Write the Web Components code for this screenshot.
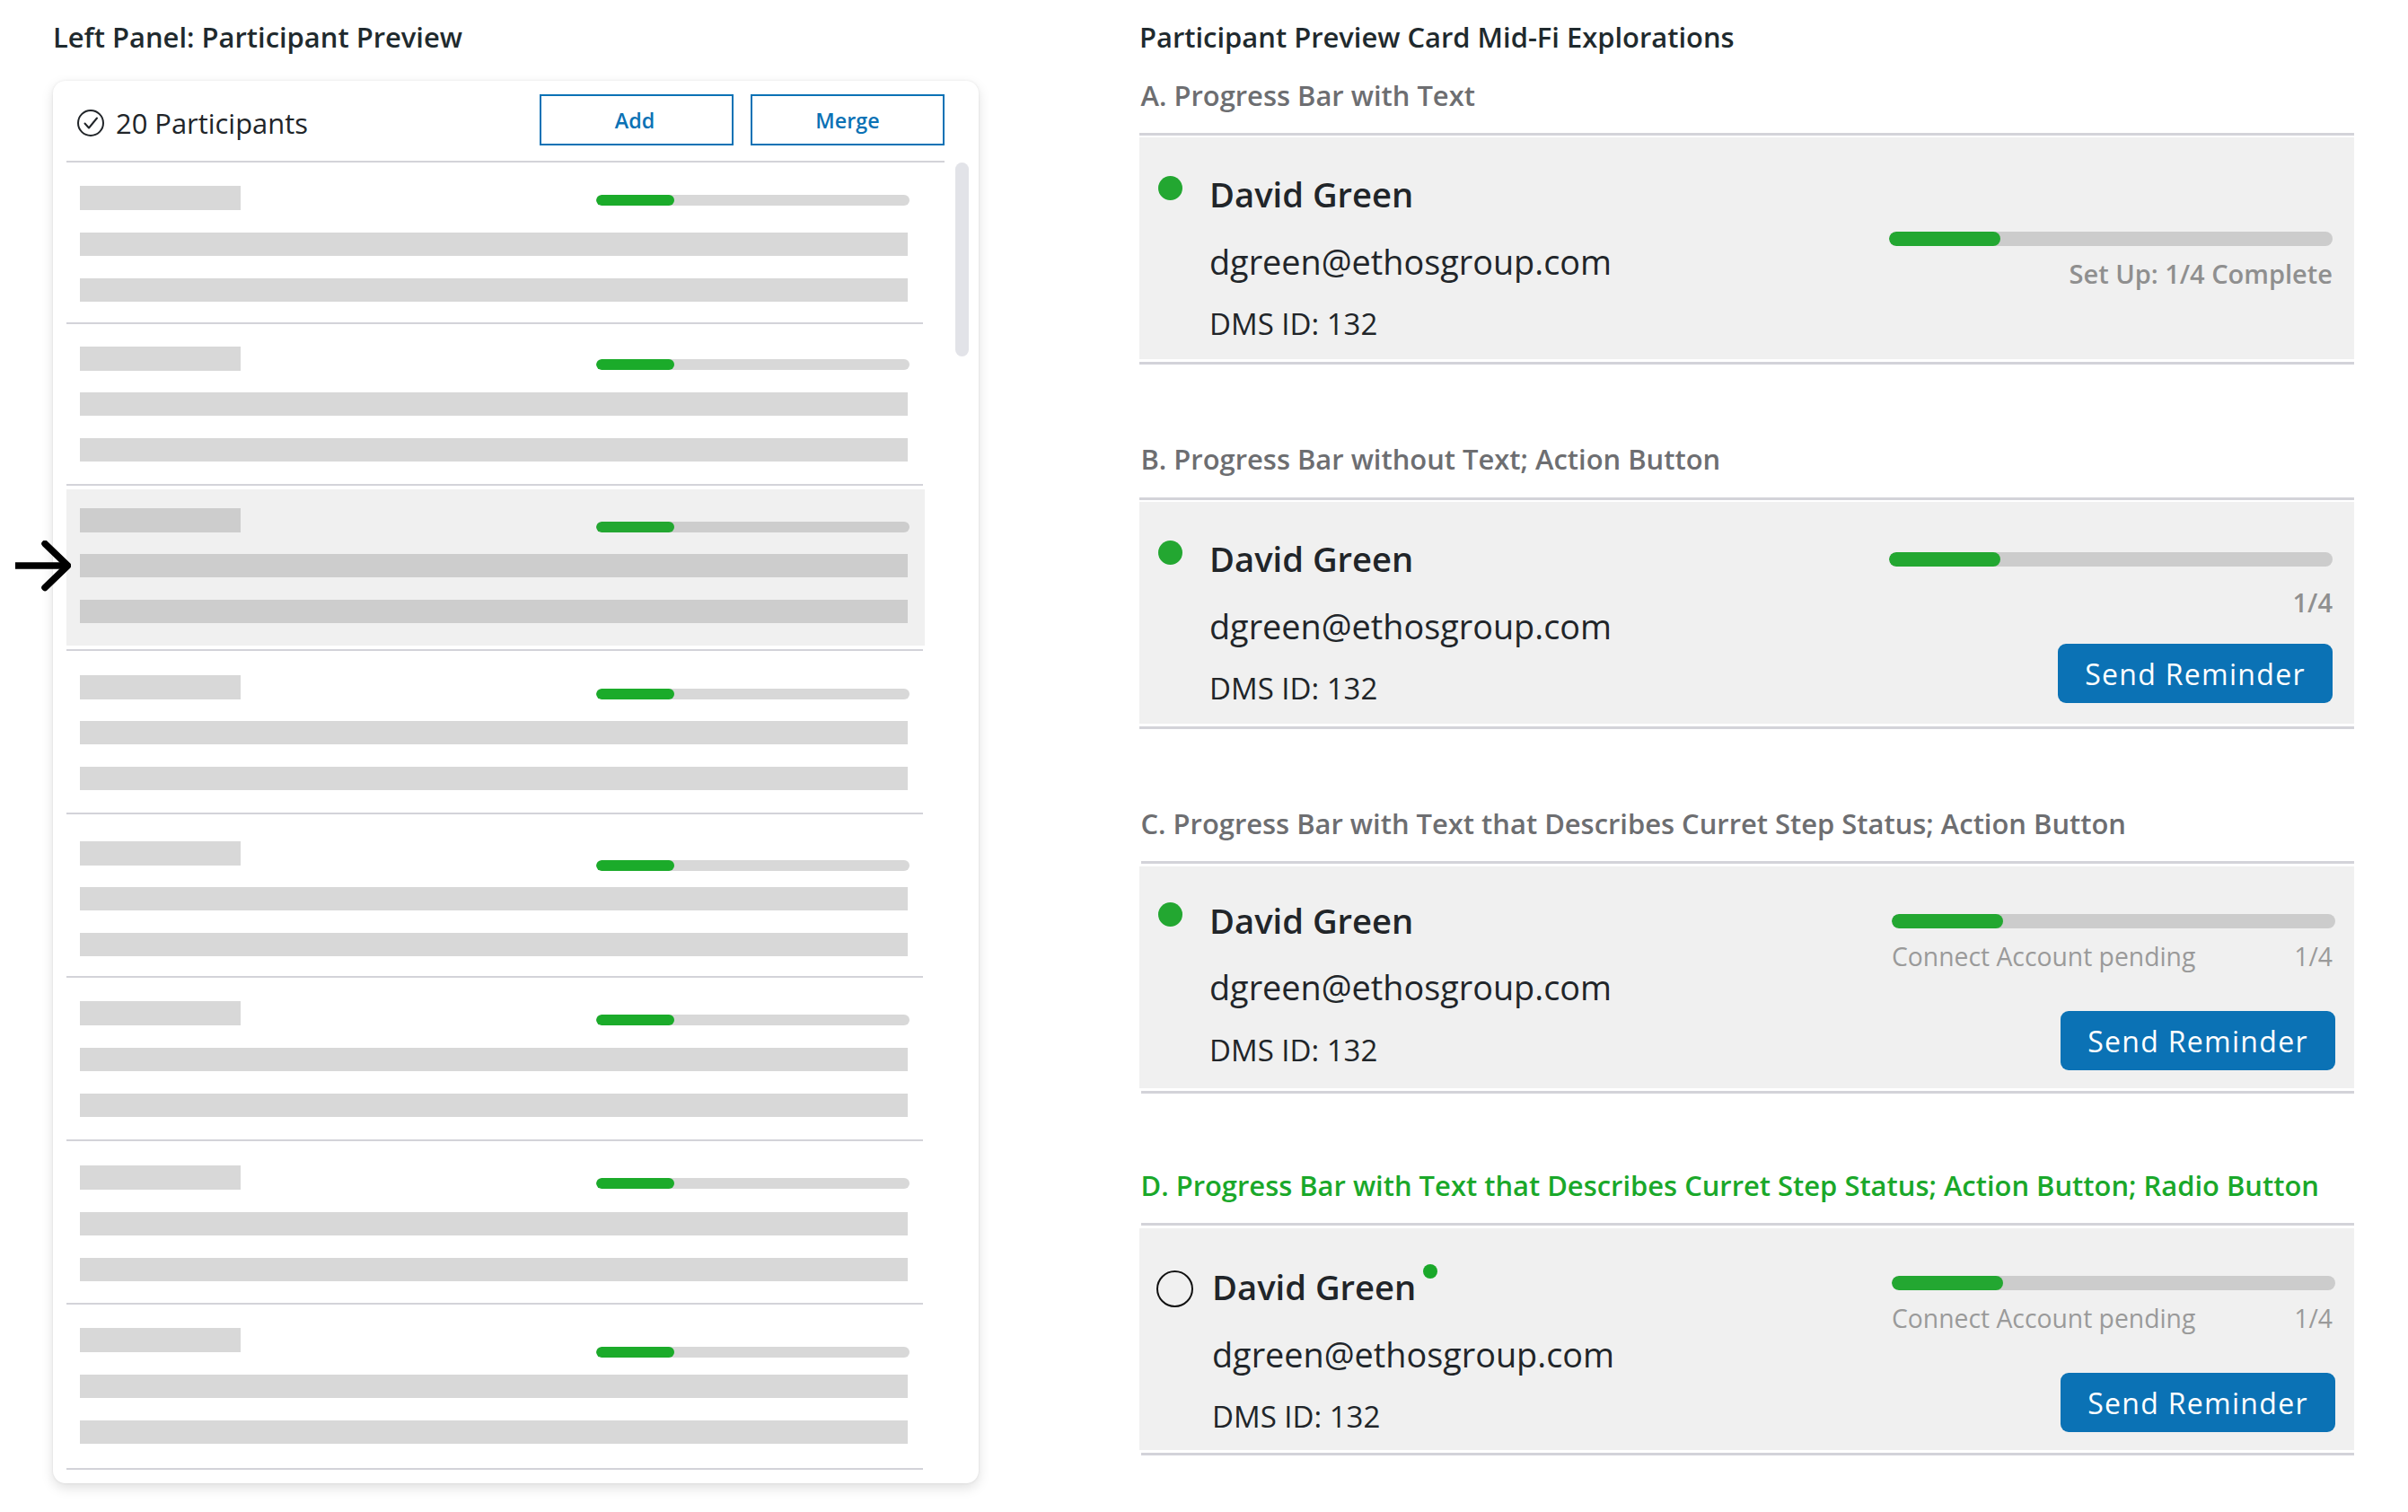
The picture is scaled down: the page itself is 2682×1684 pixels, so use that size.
<!doctype html>
<html>
<head>
<meta charset="utf-8">
<title>Participant Preview</title>
<style>
  html, body { margin: 0; padding: 0; background: #fff; }
  body { font-family: "Open Sans", "Liberation Sans", sans-serif; color: #212529; }
</style>
</head>
<body>
<explorations-page>
  <participant-panel slot="left" heading="Left Panel: Participant Preview" count="20 Participants">
    <skeleton-row pad="26" bar="10" gap="26" height="180"></skeleton-row>
    <skeleton-row pad="25" bar="14" gap="25" height="180"></skeleton-row>
    <skeleton-row pad="25" bar="15" gap="25" height="184" selected><pointer-arrow></pointer-arrow></skeleton-row>
    <skeleton-row pad="27" bar="15" gap="25" height="182"></skeleton-row>
    <skeleton-row pad="30" bar="21" gap="25" height="182"></skeleton-row>
    <skeleton-row pad="26" bar="15" gap="26" height="182"></skeleton-row>
    <skeleton-row pad="27" bar="14" gap="26" height="182"></skeleton-row>
    <skeleton-row pad="26" bar="21" gap="26" height="184"></skeleton-row>
  </participant-panel>

  <h2 slot="right-title">Participant Preview Card Mid-Fi Explorations</h2>

  <card-section slot="sections" label="A. Progress Bar with Text" style="--section-top:24px;--rule-gap:22px">
    <preview-card style="--bar-top:105px">
      <status-dot slot="leading"></status-dot>
      <progress-status caption="Set Up: 1/4 Complete" strong style="--caption-gap:11px"></progress-status>
    </preview-card>
  </card-section>

  <card-section slot="sections" label="B. Progress Bar without Text; Action Button" style="--section-top:85px;--rule-gap:23px">
    <preview-card style="--bar-top:56px">
      <status-dot slot="leading"></status-dot>
      <progress-status caption="1/4" strong style="--caption-gap:20px"></progress-status>
      <send-button slot="action" style="--action-gap:26px">Send Reminder</send-button>
    </preview-card>
  </card-section>

  <card-section slot="sections" label="C. Progress Bar with Text that Describes Curret Step Status; Action Button" inset style="--section-top:85px;--rule-gap:22px">
    <preview-card style="--name-top:35px;--email-gap:25px;--dms-gap:23px;--dot-top:40px;--bar-top:53px;--side-right:21px">
      <status-dot slot="leading"></status-dot>
      <progress-status caption="Connect Account pending" count="1/4" style="--caption-gap:11px"></progress-status>
      <send-button slot="action" style="--action-gap:41px">Send Reminder</send-button>
    </preview-card>
  </card-section>

  <card-section slot="sections" label="D. Progress Bar with Text that Describes Curret Step Status; Action Button; Radio Button" inset style="--section-top:82px;--rule-gap:22px;--label-color:#1aa82a">
    <preview-card badge style="--name-top:40px;--dot-top:47px;--dot-left:19px;--lead-gap:21px;--bar-top:53px;--side-right:21px">
      <radio-mark slot="leading"></radio-mark>
      <progress-status caption="Connect Account pending" count="1/4" style="--caption-gap:11px"></progress-status>
      <send-button slot="action" style="--action-gap:41px">Send Reminder</send-button>
    </preview-card>
  </card-section>
</explorations-page>

<script>
class Base extends HTMLElement {
  constructor() {
    super();
    this.attachShadow({ mode: "open" });
  }

  connectedCallback() {
    this.shadowRoot.innerHTML = `<style>${this.style_}</style>${this.template}`;
  }
}

class ExplorationsPage extends Base {
  get style_() {
    return `
      :host {
        display: flex;
        width: 2682px;
        min-height: 1684px;
        box-sizing: border-box;
        padding: 20px 0 0 59px;
      }
      .left { width: 1031px; flex: none; }
      .right { width: 1353px; flex: none; margin-left: 179px; }
      ::slotted(h2) {
        margin: 0;
        font: 600 30.92px/42px "Open Sans", sans-serif;
        color: #1f2a2e;
      }
    `;
  }

  get template() {
    return `
      <div class="left"><slot name="left"></slot></div>
      <div class="right">
        <slot name="right-title"></slot>
        <slot name="sections"></slot>
      </div>
    `;
  }
}

class ParticipantPanel extends Base {
  get style_() {
    return `
      :host { display: block; }
      * { box-sizing: border-box; }
      h2 { margin: 0 0 28px; font: 600 30.92px/42px "Open Sans", sans-serif; color: #1f2a2e; }
      .panel {
        width: 1031px;
        height: 1562px;
        background: #fff;
        border-radius: 14px;
        box-shadow: 0 5px 14px rgba(0, 0, 0, .13), 0 0 3px rgba(0, 0, 0, .08);
      }
      .head {
        display: flex;
        align-items: flex-start;
        margin: 0 38px 0 15px;
        height: 91px;
        padding: 15px 0 0 12px;
        border-bottom: 2px solid #d3d3d9;
      }
      .count {
        display: flex;
        align-items: center;
        gap: 13px;
        margin-top: 12px;
        font-size: 30.9px;
        line-height: 40px;
        color: #212529;
      }
      .actions { display: flex; gap: 19px; margin-left: auto; }
      button {
        width: 216px;
        height: 57px;
        padding: 0;
        background: #fff;
        border: 2px solid #0b72b5;
        color: #0b72b5;
        font: 600 23.3px "Open Sans", sans-serif;
      }
      .add { padding-right: 4px; }
      .body { display: flex; margin-left: 15px; }
      .rows { width: 954px; flex: none; }
      .thumb { width: 15px; height: 216px; margin-left: 36px; border-radius: 8px; background: #e2e3e8; }
    `;
  }

  get template() {
    return `
      <h2>${this.getAttribute("heading")}</h2>
      <div class="panel">
        <div class="head">
          <div class="count">
            <svg width="30" height="30" viewBox="0 0 30 30" fill="none" stroke="#212529" stroke-width="2">
              <circle cx="15" cy="15" r="14"/>
              <path d="M8.5 15.5l4.5 5 9-11" stroke-linecap="round" stroke-linejoin="round"/>
            </svg>
            <span>${this.getAttribute("count")}</span>
          </div>
          <div class="actions">
            <button class="add">Add</button>
            <button>Merge</button>
          </div>
        </div>
        <div class="body">
          <div class="rows"><slot></slot></div>
          <div class="thumb"></div>
        </div>
      </div>
    `;
  }
}

class SkeletonRow extends Base {
  get style_() {
    const selected = this.hasAttribute("selected");
    const block = selected ? "#cdcdcd" : "#d8d8d8";
    const green = selected ? "#23a731" : "#1bab2a";
    return `
      :host {
        display: flow-root;
        position: relative;
        box-sizing: border-box;
        height: ${this.getAttribute("height")}px;
        border-bottom: 2px solid #d3d3d9;
      }
      * { box-sizing: border-box; }
      .fill {
        height: calc(100% - 8px);
        margin: 4px -2px 4px 0;
        padding: ${this.getAttribute("pad") - 4}px 0 0 15px;
        background: ${selected ? "#f0f0f0" : "transparent"};
      }
      .top {
        display: flex;
        justify-content: space-between;
        height: 26px;
        width: 924px;
        margin-bottom: ${this.getAttribute("gap")}px;
      }
      .name { width: 179px; height: 27px; background: ${block}; }
      .track {
        width: 349px;
        height: 12px;
        margin-top: ${this.getAttribute("bar")}px;
        border-radius: 6px;
        background: ${block};
        overflow: hidden;
      }
      .value { width: 87px; height: 100%; border-radius: 6px; background: ${green}; }
      .line { width: 922px; height: 26px; margin-bottom: 25px; background: ${block}; }
    `;
  }

  get template() {
    return `
      <div class="fill">
        <div class="top">
          <div class="name"></div>
          <div class="track"><div class="value"></div></div>
        </div>
        <div class="line"></div>
        <div class="line"></div>
      </div>
      <slot></slot>
    `;
  }
}

class PointerArrow extends Base {
  get style_() {
    return `
      :host { position: absolute; left: -57px; top: 61px; width: 62px; height: 58px; }
      svg { display: block; }
    `;
  }

  get template() {
    return `
      <svg width="62" height="58" viewBox="0 0 62 58" fill="none" stroke="#000" stroke-width="7.5">
        <path d="M0 28H58"/>
        <path d="M33 3.5L58.5 28L33 52.5" stroke-linecap="round" stroke-linejoin="round"/>
      </svg>
    `;
  }
}

class CardSection extends Base {
  get style_() {
    return `
      :host { display: block; margin-top: var(--section-top, 0); }
      h3 {
        margin: 0;
        padding-left: 1.5px;
        font: 600 30.92px/40px "Open Sans", sans-serif;
        color: var(--label-color, #6d6e71);
      }
      .rule { height: 3px; background: #d3d3d9; margin-left: ${this.hasAttribute("inset") ? 2 : 0}px; }
      .top { margin-top: var(--rule-gap, 21px); margin-bottom: ${this.hasAttribute("inset") ? 3 : 2}px; }
      .bottom { margin-top: 3px; }
    `;
  }

  get template() {
    return `
      <h3>${this.getAttribute("label")}</h3>
      <div class="rule top"></div>
      <slot></slot>
      <div class="rule bottom"></div>
    `;
  }
}

class PreviewCard extends Base {
  get style_() {
    return `
      :host {
        display: flex;
        justify-content: space-between;
        height: 247px;
        box-sizing: border-box;
        background: #f0f0f0;
        padding-right: var(--side-right, 24px);
      }
      .who { display: flex; align-items: flex-start; padding-left: var(--dot-left, 21px); }
      ::slotted([slot="leading"]) { margin-top: var(--dot-top, 43px); margin-right: var(--lead-gap, 30px); }
      .text { padding-top: var(--name-top, 38px); color: #212529; }
      .name { position: relative; width: max-content; font-size: 38.2px; font-weight: 600; line-height: 50px; }
      .email { margin-top: var(--email-gap, 26px); font-size: 37.8px; line-height: 50px; }
      .dms { margin-top: var(--dms-gap, 22px); font-size: 33px; line-height: 44px; }
      .badge {
        position: absolute;
        left: calc(100% + 8px);
        top: 0;
        width: 16px;
        height: 16px;
        border-radius: 50%;
        background: #1aa82a;
      }
      .side {
        display: flex;
        flex-direction: column;
        align-items: flex-end;
        width: 494px;
        padding-top: var(--bar-top, 56px);
      }
    `;
  }

  get template() {
    return `
      <div class="who">
        <slot name="leading"></slot>
        <div class="text">
          <div class="name">David Green${this.hasAttribute("badge") ? '<span class="badge"></span>' : ""}</div>
          <div class="email">dgreen@ethosgroup.com</div>
          <div class="dms">DMS ID: 132</div>
        </div>
      </div>
      <div class="side">
        <slot></slot>
        <slot name="action"></slot>
      </div>
    `;
  }
}

class StatusDot extends Base {
  get style_() {
    return `:host { display: block; flex: none; width: 27px; height: 27px; border-radius: 50%; background: #23a731; }`;
  }

  get template() {
    return "";
  }
}

class RadioMark extends Base {
  get style_() {
    return `:host { display: block; flex: none; box-sizing: border-box; width: 41px; height: 41px; border-radius: 50%; border: 2.5px solid #111; }`;
  }

  get template() {
    return "";
  }
}

class ProgressStatus extends Base {
  get style_() {
    const strong = this.hasAttribute("strong");
    return `
      :host { display: block; width: 494px; }
      .track { height: 16px; border-radius: 8px; background: #cccccc; overflow: hidden; }
      .value { width: 124px; height: 100%; border-radius: 8px; background: #23a731; }
      .caption {
        display: flex;
        justify-content: ${strong ? "flex-end" : "space-between"};
        margin-top: var(--caption-gap, 12px);
        padding-right: ${strong ? 0 : 3}px;
        font-size: ${strong ? "29px" : "28.3px"};
        font-weight: ${strong ? 600 : 400};
        line-height: 40px;
        color: ${strong ? "#8f8f8f" : "#9a9a9a"};
      }
    `;
  }

  get template() {
    const count = this.getAttribute("count");
    return `
      <div class="track"><div class="value"></div></div>
      <div class="caption">
        <span>${this.getAttribute("caption")}</span>
        ${count ? `<span>${count}</span>` : ""}
      </div>
    `;
  }
}

class SendButton extends Base {
  get style_() {
    return `
      :host {
        display: flex;
        align-items: center;
        justify-content: center;
        box-sizing: border-box;
        width: 306px;
        height: 66px;
        margin-top: var(--action-gap, 26px);
        border-radius: 9px;
        background: #0b72b5;
        color: #fff;
        font-size: 32px;
        font-weight: 500;
        letter-spacing: 1.3px;
      }
    `;
  }

  get template() {
    return "<slot></slot>";
  }
}

customElements.define("explorations-page", ExplorationsPage);
customElements.define("participant-panel", ParticipantPanel);
customElements.define("skeleton-row", SkeletonRow);
customElements.define("pointer-arrow", PointerArrow);
customElements.define("card-section", CardSection);
customElements.define("preview-card", PreviewCard);
customElements.define("status-dot", StatusDot);
customElements.define("radio-mark", RadioMark);
customElements.define("progress-status", ProgressStatus);
customElements.define("send-button", SendButton);
</script>
</body>
</html>
